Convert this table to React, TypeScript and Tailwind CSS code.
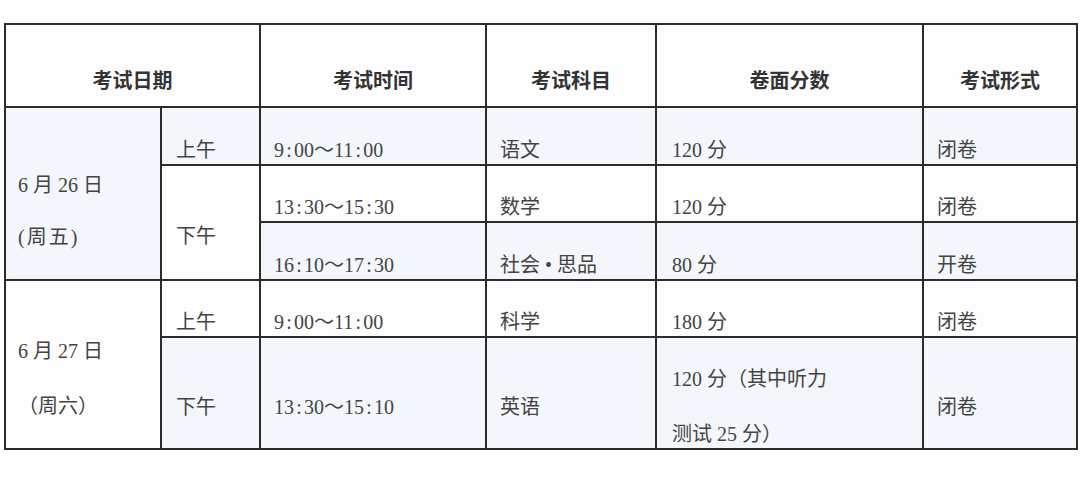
import type { ReactNode } from 'react'

const serif = 'font-["Liberation_Serif","Noto_Sans_CJK_SC",serif]'
const blue = 'bg-[#f3f7fc]'
const white = 'bg-[#fdfdfd]'

// SimSun 的冒号是半角等宽，Liberation Serif 偏窄，这里补一下宽度
function timeText(s: string): ReactNode[] {
  return s.split('').map((ch, i) =>
    ch === ':' ? (
      <span key={i} className="inline-block w-[10px] text-center">:</span>
    ) : (
      <span key={i}>{ch}</span>
    )
  )
}

interface CellProps {
  children: ReactNode
  bg: string
  rowSpan?: number
  pl?: string
  tight?: boolean
}

function Cell({ children, bg, rowSpan, pl = 'pl-[13px]', tight }: CellProps) {
  return (
    <td rowSpan={rowSpan} className={`border-2 border-[#2b2b2b] align-middle ${bg} ${pl}`}>
      <div
        className={
          tight
            ? 'pt-[17px] -mb-[17px] leading-[52px]'
            : 'pt-[14px] -mb-[14px] leading-[55px]'
        }
      >
        {children}
      </div>
    </td>
  )
}

function Head({ children, colSpan }: { children: ReactNode; colSpan?: number }) {
  return (
    <th
      colSpan={colSpan}
      className={`border-2 border-[#2b2b2b] align-middle text-center ${white}`}
    >
      <div className='pt-[14px] -mb-[14px] leading-[55px] font-["Noto_Sans_CJK_SC",sans-serif] font-bold text-[20px] text-[#333]'>
        {children}
      </div>
    </th>
  )
}

export default function App() {
  return (
    <div className="w-[1080px] h-[477px] bg-white pt-[23px] pl-[4px]">
      <table className={`table-fixed border-collapse w-[1072px] text-[20px] text-[#444] ${serif}`}>
        <colgroup>
          <col className="w-[156px]" />
          <col className="w-[99px]" />
          <col className="w-[226px]" />
          <col className="w-[170px]" />
          <col className="w-[267px]" />
          <col className="w-[154px]" />
        </colgroup>
        <thead>
          <tr className="h-[83px]">
            <Head colSpan={2}>考试日期</Head>
            <Head>考试时间</Head>
            <Head>考试科目</Head>
            <Head>卷面分数</Head>
            <Head>考试形式</Head>
          </tr>
        </thead>
        <tbody>
          <tr className="h-[58px]">
            <Cell bg={blue} rowSpan={3} pl="pl-[12px]" tight>
              <p>6 月 26 日</p>
              <p className="tracking-[2px]">(周五)</p>
            </Cell>
            <Cell bg={blue} pl="pl-[14px]">上午</Cell>
            <Cell bg={blue}>{timeText('9:00～11:00')}</Cell>
            <Cell bg={blue}>语文</Cell>
            <Cell bg={blue} pl="pl-[15px]">120 分</Cell>
            <Cell bg={blue}>闭卷</Cell>
          </tr>
          <tr className="h-[57px]">
            <Cell bg={white} rowSpan={2} pl="pl-[14px]">下午</Cell>
            <Cell bg={white}>{timeText('13:30～15:30')}</Cell>
            <Cell bg={white}>数学</Cell>
            <Cell bg={white} pl="pl-[15px]">120 分</Cell>
            <Cell bg={white}>闭卷</Cell>
          </tr>
          <tr className="h-[58px]">
            <Cell bg={blue}>{timeText('16:10～17:30')}</Cell>
            <Cell bg={blue}>社会 • 思品</Cell>
            <Cell bg={blue} pl="pl-[15px]">80 分</Cell>
            <Cell bg={blue}>开卷</Cell>
          </tr>
          <tr className="h-[57px]">
            <Cell bg={white} rowSpan={2} pl="pl-[12px]">
              <p>6 月 27 日</p>
              <p>（周六）</p>
            </Cell>
            <Cell bg={white} pl="pl-[14px]">上午</Cell>
            <Cell bg={white}>{timeText('9:00～11:00')}</Cell>
            <Cell bg={white}>科学</Cell>
            <Cell bg={white} pl="pl-[15px]">180 分</Cell>
            <Cell bg={white}>闭卷</Cell>
          </tr>
          <tr className="h-[111px]">
            <Cell bg={blue} pl="pl-[14px]">下午</Cell>
            <Cell bg={blue}>{timeText('13:30～15:10')}</Cell>
            <Cell bg={blue}>英语</Cell>
            <Cell bg={blue} pl="pl-[15px]">
              <p>120 分（其中听力</p>
              <p>测试 25 分）</p>
            </Cell>
            <Cell bg={blue}>闭卷</Cell>
          </tr>
        </tbody>
      </table>
    </div>
  )
}
